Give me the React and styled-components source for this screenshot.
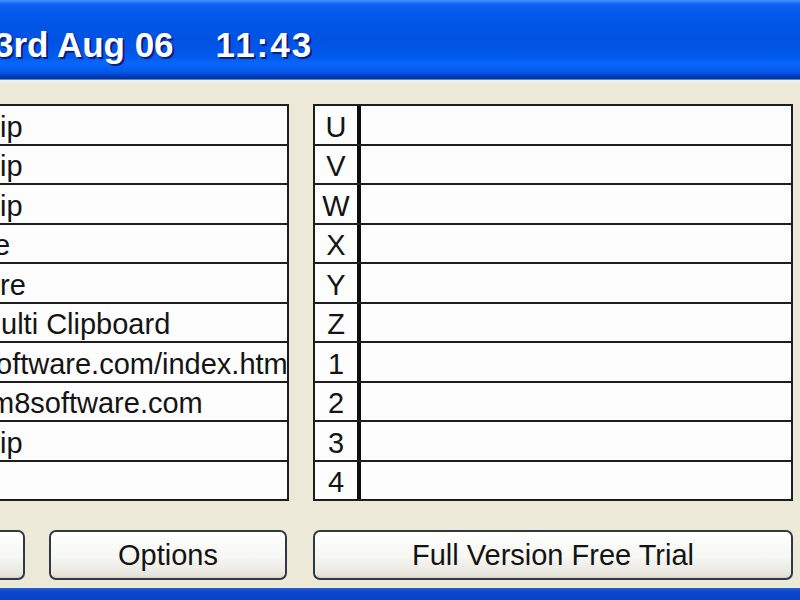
import React from "react";
import styled, { createGlobalStyle } from "styled-components";

// the window is wider than the view: its left edge sits off screen
const OFFSET = 40;

const clips = [
  { text: "ip", x: 0 },
  { text: "ip", x: 0 },
  { text: "ip", x: 0 },
  { text: "e", x: -6 },
  { text: "re", x: 0 },
  { text: "ulti Clipboard", x: 1 },
  { text: "oftware.com/index.htm", x: -4 },
  { text: "m8software.com", x: -10 },
  { text: "ip", x: 0 },
  { text: "", x: 0 },
];

const keys = ["U", "V", "W", "X", "Y", "Z", "1", "2", "3", "4"];

function App() {
  return (
    <>
      <GlobalStyle />
      <Window>
        <TitleBar>
          <TitleText>
            3rd Aug 06<Time>11:43</Time>
          </TitleText>
        </TitleBar>
        <Body>
          <Table>
            {clips.map((c, i) => (
              <Row key={i}>
                <TextCell $x={c.x}>{c.text}</TextCell>
              </Row>
            ))}
          </Table>
          <Table>
            {keys.map((k) => (
              <Row key={k}>
                <KeyCell>{k}</KeyCell>
                <TextCell $x={-OFFSET} />
              </Row>
            ))}
          </Table>
          <ButtonGroup>
            <Button />
            <Button>Options</Button>
          </ButtonGroup>
          <Button>Full Version Free Trial</Button>
        </Body>
        <BottomEdge />
      </Window>
    </>
  );
}

const GlobalStyle = createGlobalStyle`
  html, body {
    margin: 0;
    padding: 0;
    overflow: hidden;
    background: #ece9d8;
  }
`;

const Window = styled.div`
  width: 848px;
  height: 600px;
  margin-left: -${OFFSET}px;
  display: flex;
  flex-direction: column;
  background: #ece9d8;
  font-family: "Liberation Sans", Arial, sans-serif;
`;

const TitleBar = styled.div`
  height: 80px;
  flex: none;
  box-sizing: border-box;
  padding: 27px 0 0 ${OFFSET - 6}px;
  background: linear-gradient(
    to bottom,
    #4a93ff 0px,
    #2a78fa 2px,
    #0a5ff0 5px,
    #0258ea 14px,
    #0052e2 40px,
    #0159ec 56px,
    #0a66fb 64px,
    #0458ea 72px,
    #003fba 76px,
    #0032a0 79px,
    #c9d4ea 80px
  );
`;

const TitleText = styled.div`
  display: flex;
  font-size: 35px;
  line-height: 35px;
  font-weight: bold;
  color: #ffffff;
  white-space: pre;
  text-shadow: 2px 2px 0 #0a2080;
`;

const Time = styled.span`
  margin-left: 42px;
  letter-spacing: 2px;
`;

const Body = styled.div`
  flex: 1;
  display: grid;
  grid-template-columns: 329px 480px;
  grid-template-rows: auto 50px;
  align-content: start;
  column-gap: 24px;
  row-gap: 29px;
  padding-top: 24px;
  background: linear-gradient(to bottom, #f4f2e8 0px, #ece9d8 6px);
`;

const Table = styled.div`
  display: flex;
  flex-direction: column;
  border: 2px solid #1e1e1e;
  background: #fdfdfd;
`;

const Row = styled.div`
  display: flex;
  height: 37.5px;
  border-bottom: 2px solid #1e1e1e;
  &:last-child {
    border-bottom: none;
  }
`;

const TextCell = styled.div`
  flex: 1;
  min-width: 0;
  overflow: hidden;
  white-space: nowrap;
  box-sizing: border-box;
  padding: 4.5px 0 0 ${(p) => p.$x + OFFSET - 2}px;
  font-size: 29px;
  line-height: 33px;
  color: #141414;
`;

const KeyCell = styled.div`
  width: 46px;
  flex: none;
  box-sizing: border-box;
  padding-top: 4.5px;
  border-right: 4px solid #0e0e0e;
  text-align: center;
  font-size: 29px;
  line-height: 33px;
  color: #141414;
`;

const ButtonGroup = styled.div`
  display: grid;
  grid-template-columns: 1fr 238px;
  column-gap: 24px;
  padding-right: 2px;
`;

const Button = styled.button`
  height: 50px;
  margin: 0;
  padding: 0;
  box-sizing: border-box;
  border: 2px solid #2f3946;
  border-radius: 7px;
  background: linear-gradient(to bottom, #ffffff 0%, #f6f6f2 55%, #e9e7df 90%, #dcd8cc 100%);
  font-family: "Liberation Sans", Arial, sans-serif;
  font-size: 29px;
  color: #141414;
  display: flex;
  align-items: center;
  justify-content: center;
  width: 100%;
`;

const BottomEdge = styled.div`
  height: 12px;
  flex: none;
  background: linear-gradient(to bottom, #2a5fc8 0px, #0b48d2 3px, #0842c6 12px);
`;

export default App;
